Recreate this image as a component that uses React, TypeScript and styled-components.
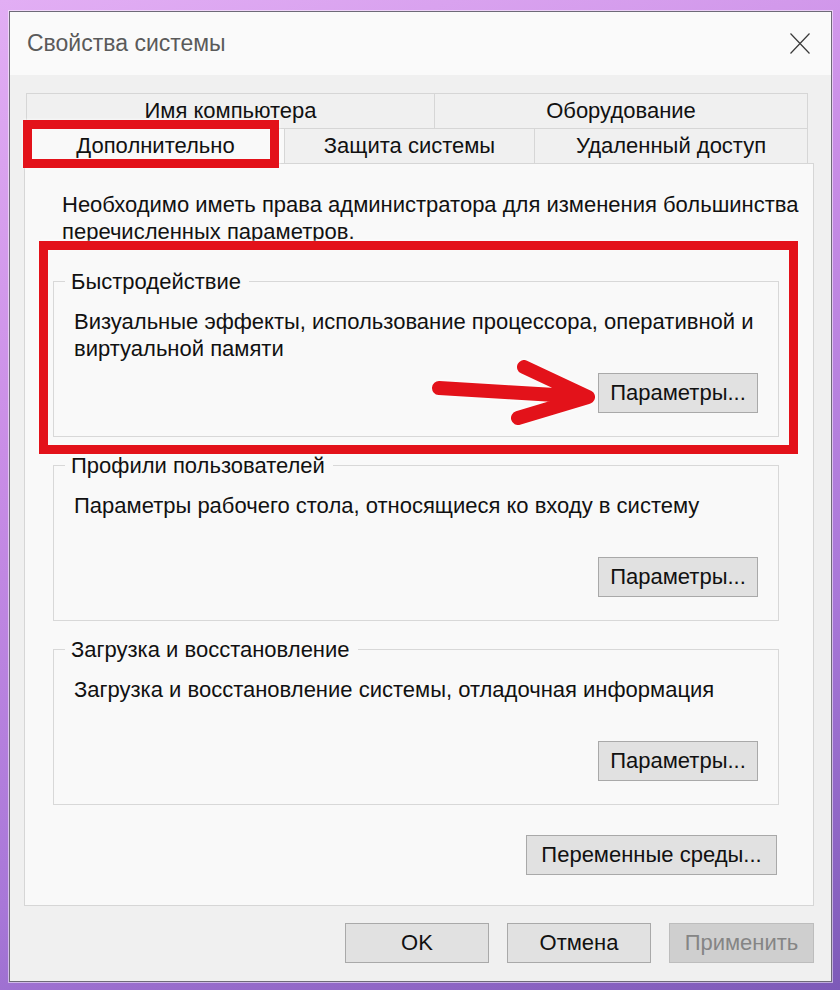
import styled, { createGlobalStyle } from 'styled-components'

const GlobalStyle = createGlobalStyle`
  html, body {
    margin: 0;
    padding: 0;
  }
  body {
    width: 840px;
    height: 990px;
    overflow: hidden;
    font-family: 'Liberation Sans', Arial, sans-serif;
  }
`

interface TabProps {
  $w: number
  $active?: boolean
}

interface ButtonProps {
  $w?: number
  $disabled?: boolean
}

const tabsTop = [
  { label: 'Имя компьютера', w: 409 },
  { label: 'Оборудование', w: 373 },
]

const tabsBottom = [
  { label: 'Дополнительно', w: 259, active: true },
  { label: 'Защита системы', w: 250 },
  { label: 'Удаленный доступ', w: 273 },
]

const groups = [
  {
    title: 'Быстродействие',
    text: 'Визуальные эффекты, использование процессора, оперативной и виртуальной памяти',
    marked: true,
  },
  {
    title: 'Профили пользователей',
    text: 'Параметры рабочего стола, относящиеся ко входу в систему',
  },
  {
    title: 'Загрузка и восстановление',
    text: 'Загрузка и восстановление системы, отладочная информация',
  },
]

const App = () => {
  return (
    <>
      <GlobalStyle />
      <Desktop>
        <Window>
          <TitleBar>
            <Title>Свойства системы</Title>
            <CloseIcon viewBox="0 0 20 21">
              <path d="M0.5 0.5 L19.5 20.5 M19.5 0.5 L0.5 20.5" />
            </CloseIcon>
          </TitleBar>
          <Body>
            <Tabs>
              <TabRow>
                {tabsTop.map((t) => (
                  <Tab key={t.label} $w={t.w}>
                    {t.label}
                  </Tab>
                ))}
              </TabRow>
              <TabRow>
                {tabsBottom.map((t) => (
                  <Tab key={t.label} $w={t.w} $active={t.active}>
                    {t.label}
                    {t.active && <TabMark />}
                  </Tab>
                ))}
              </TabRow>
            </Tabs>
            <Panel>
              <Intro>
                Необходимо иметь права администратора для изменения большинства перечисленных параметров.
              </Intro>
              <Groups>
                {groups.map((g) => (
                  <GroupWrap key={g.title}>
                    <Group>
                      <Legend>{g.title}</Legend>
                      <GroupText>{g.text}</GroupText>
                      <ButtonRow>
                        <Button $w={160}>Параметры...</Button>
                      </ButtonRow>
                    </Group>
                    {g.marked && (
                      <>
                        <GroupMark />
                        <Arrow viewBox="0 0 726 171">
                          <path d="M386 120 L535 129 M471 99 L535 129 L465 150" />
                        </Arrow>
                      </>
                    )}
                  </GroupWrap>
                ))}
              </Groups>
              <EnvRow>
                <Button $w={251}>Переменные среды...</Button>
              </EnvRow>
            </Panel>
            <Footer>
              <Button $w={144}>OK</Button>
              <Button $w={144}>Отмена</Button>
              <Button $w={145} $disabled>
                Применить
              </Button>
            </Footer>
          </Body>
        </Window>
      </Desktop>
    </>
  )
}

const Desktop = styled.div`
  width: 840px;
  height: 990px;
  box-sizing: border-box;
  padding: 11px 8px 8px 9px;
  background: linear-gradient(160deg, #e2aef4 0%, #c98de6 35%, #a877d8 70%, #7d5ab8 100%);
`

const Window = styled.div`
  width: 823px;
  height: 971px;
  box-sizing: border-box;
  border: 1px solid #6e6a78;
  background: #f0f0f0;
  display: flex;
  flex-direction: column;
  box-shadow: 0 0 0 1px rgba(255, 255, 255, 0.5);
`

const TitleBar = styled.div`
  height: 63px;
  flex-shrink: 0;
  display: flex;
  align-items: center;
  justify-content: space-between;
  padding: 0 21px 0 17px;
  background: #fafafa;
`

const Title = styled.div`
  font-size: 23px;
  color: #5a5a5a;
  margin-top: -1px;
`

const CloseIcon = styled.svg`
  width: 20px;
  height: 21px;
  fill: none;
  stroke: #3a3a3a;
  stroke-width: 1.2;
`

const Body = styled.div`
  flex: 1;
  display: flex;
  flex-direction: column;
  padding: 18px 17px 0 14px;
`

const Tabs = styled.div`
  display: flex;
  flex-direction: column;
  padding-left: 2px;
`

const TabRow = styled.div`
  display: flex;
  height: 35px;
`

const Tab = styled.div<TabProps>`
  position: relative;
  width: ${({ $w }) => $w}px;
  box-sizing: border-box;
  display: flex;
  align-items: center;
  justify-content: center;
  font-size: 22px;
  color: #111;
  border: 1px solid #d6d6d6;
  border-bottom: none;
  border-left: none;
  background: ${({ $active }) => ($active ? '#f9f9f9' : '#f0f0f0')};
  &:first-child {
    border-left: 1px solid #d6d6d6;
  }
`

const TabMark = styled.div`
  position: absolute;
  left: -4px;
  right: 5px;
  top: -9px;
  bottom: -5px;
  border: 9px solid #e3121a;
  box-shadow: 0 0 3px rgba(255, 255, 255, 0.9), inset 0 0 2px rgba(255, 255, 255, 0.8);
  pointer-events: none;
`

const Panel = styled.div`
  height: 743px;
  box-sizing: border-box;
  width: 790px;
  border: 1px solid #d6d6d6;
  background: #f9f9f9;
  padding: 27px 34px 0 28px;
  display: flex;
  flex-direction: column;
`

const Intro = styled.div`
  font-size: 22px;
  line-height: 27px;
  color: #111;
  padding-left: 9px;
  margin-right: -30px;
`

const Groups = styled.div`
  display: flex;
  flex-direction: column;
  gap: 15px;
  margin-top: 23px;
`

const GroupWrap = styled.div`
  position: relative;
`

const Group = styled.fieldset`
  margin: 0;
  border: 1px solid #d8d8d8;
  padding: 13px 20px 23px 20px;
  min-width: 0;
`

const Legend = styled.legend`
  font-size: 22px;
  line-height: 27px;
  color: #111;
  margin-left: -9px;
  padding: 0 8px 0 6px;
`

const GroupText = styled.div`
  font-size: 22px;
  line-height: 27px;
  color: #111;
  min-height: 54px;
`

const ButtonRow = styled.div`
  display: flex;
  justify-content: flex-end;
  margin-top: 11px;
`

const GroupMark = styled.div`
  position: absolute;
  left: -14px;
  right: -19px;
  top: -27px;
  bottom: -17px;
  border: 9px solid #e3121a;
  box-shadow: 0 0 3px rgba(255, 255, 255, 0.9), inset 0 0 2px rgba(255, 255, 255, 0.8);
  pointer-events: none;
`

const Arrow = styled.svg`
  position: absolute;
  left: 0;
  top: 0;
  width: 726px;
  height: 171px;
  overflow: visible;
  fill: none;
  stroke: #e3121a;
  stroke-width: 14;
  stroke-linecap: round;
  stroke-linejoin: round;
  filter: drop-shadow(0 0 2px rgba(255, 255, 255, 0.95));
`

const Button = styled.div<ButtonProps>`
  width: ${({ $w }) => ($w ? $w : 150)}px;
  height: 40px;
  box-sizing: border-box;
  display: flex;
  align-items: center;
  justify-content: center;
  font-size: 22px;
  white-space: nowrap;
  color: ${({ $disabled }) => ($disabled ? '#858585' : '#111')};
  background: ${({ $disabled }) => ($disabled ? '#cfcfcf' : '#e1e1e1')};
  border: 1px solid ${({ $disabled }) => ($disabled ? '#bdbdbd' : '#a9a9a9')};
`

const EnvRow = styled.div`
  display: flex;
  justify-content: flex-end;
  margin-top: 30px;
  padding-right: 2px;
`

const Footer = styled.div`
  display: flex;
  justify-content: flex-end;
  gap: 18px;
  margin-top: 17px;
  padding-right: 0;
`

export default App
